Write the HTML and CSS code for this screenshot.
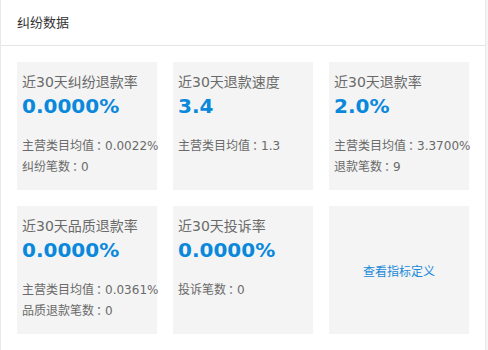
FILE: index.html
```html
<!DOCTYPE html>
<html lang="zh-CN">
<head>
    <meta charset="UTF-8">
    <meta name="viewport" content="width=device-width, initial-scale=1.0">
    <title>纠纷数据</title>
    <link rel="stylesheet" href="styles.css">
</head>
<body>
    <div class="panel">
        <div class="panel-header">纠纷数据</div>
        <div class="panel-body">
            <div class="card">
                <div class="card-title">近30天纠纷退款率</div>
                <div class="card-value">0.0000%</div>
                <div class="card-info">
                    <div>主营类目均值<span class="colon">：</span>0.0022%</div>
                    <div>纠纷笔数<span class="colon">：</span>0</div>
                </div>
            </div>
            <div class="card">
                <div class="card-title">近30天退款速度</div>
                <div class="card-value">3.4</div>
                <div class="card-info">
                    <div>主营类目均值<span class="colon">：</span>1.3</div>
                </div>
            </div>
            <div class="card">
                <div class="card-title">近30天退款率</div>
                <div class="card-value">2.0%</div>
                <div class="card-info">
                    <div>主营类目均值<span class="colon">：</span>3.3700%</div>
                    <div>退款笔数<span class="colon">：</span>9</div>
                </div>
            </div>
            <div class="card">
                <div class="card-title">近30天品质退款率</div>
                <div class="card-value">0.0000%</div>
                <div class="card-info">
                    <div>主营类目均值<span class="colon">：</span>0.0361%</div>
                    <div>品质退款笔数<span class="colon">：</span>0</div>
                </div>
            </div>
            <div class="card">
                <div class="card-title">近30天投诉率</div>
                <div class="card-value">0.0000%</div>
                <div class="card-info">
                    <div>投诉笔数<span class="colon">：</span>0</div>
                </div>
            </div>
            <div class="card card-link">
                <a href="#">查看指标定义</a>
            </div>
        </div>
    </div>
</body>
</html>
```

FILE: styles.css
```css
body {
    margin: 0;
    background-color: #f5f5f5;
    font-family: "DejaVu Sans", "Noto Sans CJK SC", sans-serif;
}

.panel {
    width: 486px;
    box-sizing: border-box;
    background: #fff;
    border: 1px solid #e8e8e8;
    border-top: none;
    min-height: 360px;
}

.panel-header {
    height: 45px;
    line-height: 46px;
    padding-left: 16px;
    font-size: 13px;
    color: #333;
    border-bottom: 1px solid #e5e5e5;
}

.panel-body {
    display: grid;
    grid-template-columns: repeat(3, 140px);
    grid-auto-rows: 128px;
    gap: 16px;
    padding: 16px;
}

.card {
    background-color: #f4f4f4;
    padding: 10px 5px 0 5px;
}

.card-title {
    font-size: 14px;
    line-height: 20px;
    color: #6a6a6a;
    white-space: nowrap;
}

.card-value {
    font-size: 20px;
    font-weight: bold;
    line-height: 28px;
    color: #0a88dc;
}

.card-info {
    margin-top: 15px;
    font-size: 12px;
    line-height: 20px;
    color: #6a6a6a;
    white-space: nowrap;
}

.colon {
    font-family: "Noto Sans CJK SC", sans-serif;
    font-feature-settings: "halt";
    padding: 0 3px 0 2px;
}

.card-link {
    display: flex;
    align-items: center;
    justify-content: center;
    padding: 0;
}

.card-link a {
    font-size: 12px;
    color: #1a8ad8;
    text-decoration: none;
}
```
